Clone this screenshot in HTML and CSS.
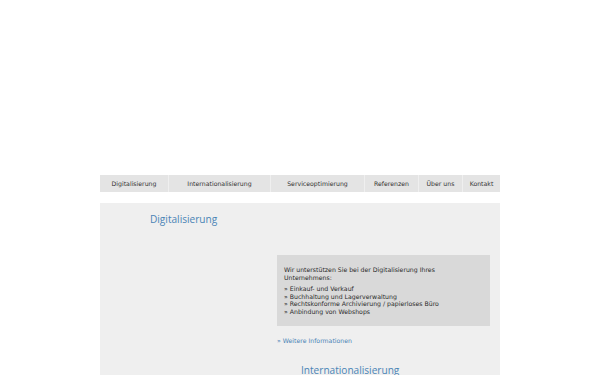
FILE: index.html
```html
<!DOCTYPE html>
<html>
<head>
<meta charset="utf-8">
<link rel="stylesheet" href="styles.css">
</head>
<body>
<div class="page">
  <div class="header"></div>
  <nav class="nav">
    <a class="nav-item w1">Digitalisierung</a>
    <a class="nav-item w2">Internationalisierung</a>
    <a class="nav-item w3">Serviceoptimierung</a>
    <a class="nav-item w4">Referenzen</a>
    <a class="nav-item w5">Über uns</a>
    <a class="nav-item w6">Kontakt</a>
  </nav>
  <main class="content">
    <section class="section">
      <h2 class="section-title">Digitalisierung</h2>
      <div class="section-body">
        <div class="info-box">
          <p class="info-intro">Wir unterstützen Sie bei der Digitalisierung Ihres Unternehmens:</p>
          <ul class="info-list">
            <li>» Einkauf- und Verkauf</li>
            <li>» Buchhaltung und Lagerverwaltung</li>
            <li>» Rechtskonforme Archivierung / papierloses Büro</li>
            <li>» Anbindung von Webshops</li>
          </ul>
        </div>
        <a class="more">» Weitere Informationen</a>
      </div>
    </section>
    <section class="section second">
      <h2 class="section-title center">Internationalisierung</h2>
    </section>
  </main>
</div>
</body>
</html>
```
FILE: styles.css
```css
* { box-sizing: border-box; }
html, body { margin: 0; padding: 0; background: #ffffff; }
body { font-family: "DejaVu Sans", Verdana, sans-serif; overflow: hidden; height: 375px; }
.page { width: 400px; margin: 0 auto; }
.header { height: 175px; }
.nav { display: flex; height: 17px; background: #e4e4e4; }
.nav-item {
  display: flex; align-items: center; justify-content: center;
  font-size: 6.2px; color: #333; border-right: 1px solid #efefef;
  height: 100%;
}
.nav-item:last-child { border-right: none; }
.w1 { width: 69px; }
.w2 { width: 102px; }
.w3 { width: 94px; }
.w4 { width: 54px; }
.w5 { width: 44px; }
.w6 { flex: 1; }
.content { margin-top: 11px; background: #efefef; height: 172px; overflow: hidden; }
.section { padding-top: 9px; }
.section-title {
  margin: 0; font-family: "Open Sans", sans-serif; font-weight: 400;
  font-size: 10.1px; color: #4a84b6; padding-left: 50px; line-height: 15px;
}
.section-title.center { padding-left: 201px; }
.section-body { padding-left: 177px; padding-right: 10px; padding-top: 28px; }
.info-box { background: #d9d9d9; height: 71px; padding: 11px 7px 0; color: #2a2a2a; font-size: 6.2px; line-height: 7.6px; }
.info-intro { margin: 0 0 4px 0; }
.info-list { list-style: none; margin: 0; padding: 0; }
.more { display: block; margin-top: 10px; font-size: 6.2px; color: #4a84b6; line-height: 9px; }
.second { padding-top: 18px; }
```
